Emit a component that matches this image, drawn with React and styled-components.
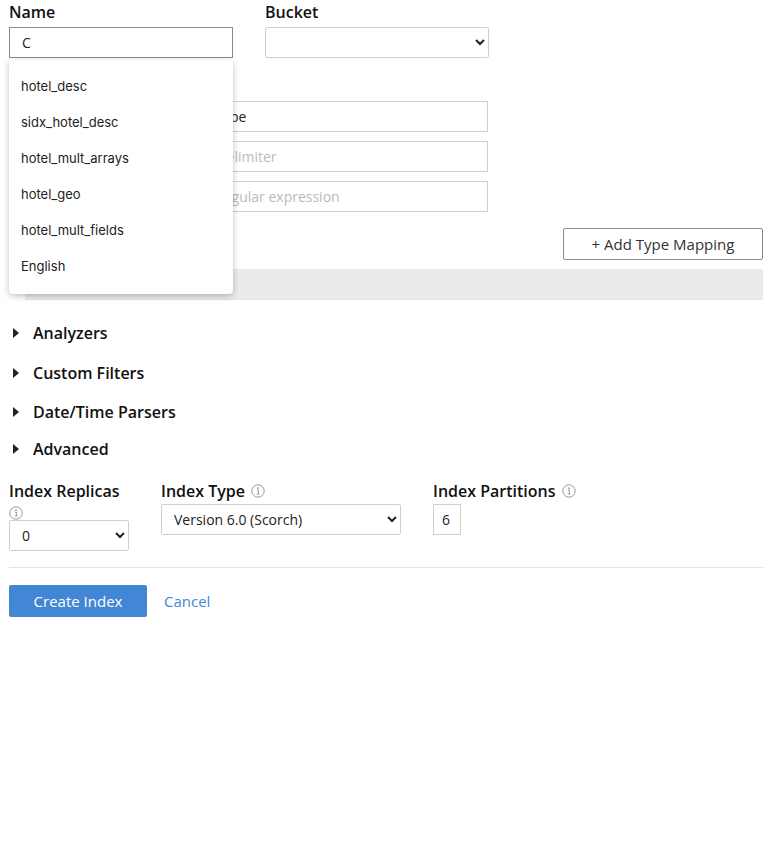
import styled, { createGlobalStyle } from "styled-components";

const Global = createGlobalStyle`
  body { margin: 0; background: #fff; font-family: "Open Sans", sans-serif; color: #111; }
`;

const Page = styled.div`
  padding: 2px 16px 0 9px;
  width: 754px;
  height: 866px;
`;

const TopRow = styled.div`
  display: flex;
  gap: 32px;
`;

const Field = styled.div`
  position: relative;
  display: flex;
  flex-direction: column;
  width: ${(p) => p.$w || "auto"};
`;

const Label = styled.label`
  font-size: 16px;
  font-weight: 600;
  line-height: 20px;
  margin-bottom: ${(p) => (p.$mb !== undefined ? p.$mb : 5)}px;
  display: flex;
  align-items: center;
  gap: 6px;
`;

const TextInput = styled.input`
  box-sizing: border-box;
  height: ${(p) => p.$h || 31}px;
  width: ${(p) => p.$w || "100%"};
  border: 1px solid ${(p) => (p.$dark ? "#8a8a8a" : "#cfcfcf")};
  padding: 0 ${(p) => p.$pad || 12}px;
  font: 14px "Open Sans", sans-serif;
  color: #222;
  outline: none;
  &::placeholder { color: #bbb; }
`;

const Select = styled.select`
  box-sizing: border-box;
  height: 31px;
  width: ${(p) => p.$w};
  border: 1px solid #cfcfcf;
  border-radius: 2px;
  background: #fff;
  padding: 0 8px;
  font: 14px "Open Sans", sans-serif;
  color: #222;
`;

const Menu = styled.ul`
  position: absolute;
  top: 58px;
  left: 0;
  width: 224px;
  margin: 0;
  padding: 18px 0 0;
  list-style: none;
  background: #fff;
  border-radius: 4px;
  box-shadow: 0 2px 6px rgba(0, 0, 0, 0.25);
  z-index: 5;
`;

const MenuItem = styled.li`
  height: 36px;
  line-height: 36px;
  padding-left: 12px;
  font: 13px "Inter", "Open Sans", sans-serif;
  color: #222;
`;

const TypeRows = styled.div`
  margin-top: 43px;
  display: flex;
  flex-direction: column;
  gap: 9px;
  padding-left: 196px;
  width: 283px;
`;

const MappingBar = styled.div`
  display: flex;
  justify-content: flex-end;
  margin-top: 16px;
`;

const GhostButton = styled.button`
  width: 200px;
  height: 32px;
  background: #fff;
  border: 1px solid #8a8a8a;
  border-radius: 2px;
  font: 15px "Open Sans", sans-serif;
  color: #333;
`;

const GrayBar = styled.div`
  margin: 9px 0 0 16px;
  height: 30px;
  background: #ebebeb;
  border-bottom: 1px solid #dce6ee;
`;

const Sections = styled.div`
  margin-top: 13px;
  display: flex;
  flex-direction: column;
`;

const Section = styled.div`
  display: flex;
  align-items: center;
  gap: 14px;
  height: ${(p) => p.$h}px;
  font-size: 16px;
  font-weight: 600;
  padding-left: 4px;
`;

const Caret = styled.span`
  width: 0;
  height: 0;
  border-top: 5px solid transparent;
  border-bottom: 5px solid transparent;
  border-left: 6px solid #222;
`;

const Options = styled.div`
  display: flex;
  gap: 32px;
  margin-top: 14px;
`;

const InfoRow = styled.div`
  margin: 2px 0 3px;
  height: 14px;
`;

const Info = () => (
  <svg width="14" height="14" viewBox="0 0 14 14">
    <circle cx="7" cy="7" r="6.2" fill="none" stroke="#999" />
    <circle cx="7" cy="4.2" r="0.9" fill="#999" />
    <path d="M6 6.2h1.4v3.8M5.8 10h2.6" stroke="#999" fill="none" strokeWidth="1" />
  </svg>
);

const Divider = styled.hr`
  border: 0;
  border-top: 1px solid #e3e3e3;
  margin: 16px 0 17px;
`;

const Actions = styled.div`
  display: flex;
  align-items: center;
  gap: 17px;
`;

const Primary = styled.button`
  width: 138px;
  height: 32px;
  background: #4287d6;
  color: #fff;
  border: 0;
  border-radius: 2px;
  font: 15px "Open Sans", sans-serif;
`;

const LinkText = styled.a`
  color: #4287d6;
  font-size: 15px;
`;

export default function App() {
  const items = ["hotel_desc", "sidx_hotel_desc", "hotel_mult_arrays", "hotel_geo", "hotel_mult_fields", "English"];
  return (
    <Page>
      <Global />
      <TopRow>
        <Field $w="224px">
          <Label>Name</Label>
          <TextInput $dark defaultValue="C" />
          <Menu>
            {items.map((i) => (
              <MenuItem key={i}>{i}</MenuItem>
            ))}
          </Menu>
        </Field>
        <Field $w="224px">
          <Label>Bucket</Label>
          <Select $w="224px"><option></option></Select>
        </Field>
      </TopRow>
      <TypeRows>
        <TextInput defaultValue="type" />
        <TextInput placeholder="delimiter" />
        <TextInput placeholder="regular expression" />
      </TypeRows>
      <MappingBar>
        <GhostButton>+ Add Type Mapping</GhostButton>
      </MappingBar>
      <GrayBar />
      <Sections>
        <Section $h={40}><Caret />Analyzers</Section>
        <Section $h={40}><Caret />Custom Filters</Section>
        <Section $h={38}><Caret />Date/Time Parsers</Section>
        <Section $h={36}><Caret />Advanced</Section>
      </Sections>
      <Options>
        <Field $w="120px">
          <Label $mb={0}>Index Replicas</Label>
          <InfoRow><Info /></InfoRow>
          <Select $w="120px"><option>0</option></Select>
        </Field>
        <Field $w="240px">
          <Label $mb={3}>Index Type <Info /></Label>
          <Select $w="240px"><option>Version 6.0 (Scorch)</option></Select>
        </Field>
        <Field $w="160px">
          <Label $mb={3}>Index Partitions <Info /></Label>
          <TextInput $w="28px" $pad={8} defaultValue="6" />
        </Field>
      </Options>
      <Divider />
      <Actions>
        <Primary>Create Index</Primary>
        <LinkText>Cancel</LinkText>
      </Actions>
    </Page>
  );
}
